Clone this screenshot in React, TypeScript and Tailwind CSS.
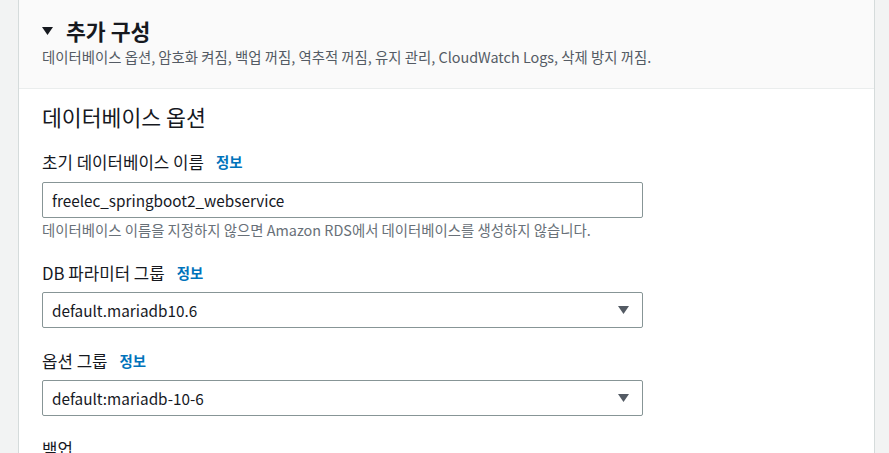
import React from "react";

const font = { fontFamily: '"Noto Sans CJK KR", "Noto Sans", sans-serif' };

function Caret() {
  return (
    <svg width="11" height="8" viewBox="0 0 11 8" className="shrink-0">
      <path d="M0 0 L11 0 L5.5 8 Z" fill="#545b64" />
    </svg>
  );
}

function Label({ text }: { text: string }) {
  return (
    <div className="flex h-[22px] items-center gap-[12px] text-[16.8px] leading-[22px] text-[#16191f]">
      <span>{text}</span>
      <span className="text-[14.4px] font-bold text-[#0073bb]">정보</span>
    </div>
  );
}

function Select({ value }: { value: string }) {
  return (
    <div className="flex h-[36px] w-[601px] items-center justify-between rounded-[2px] border border-[#879596] bg-white pl-[9px] pr-[13px] text-[15.3px] text-[#16191f]">
      <span>{value}</span>
      <Caret />
    </div>
  );
}

export default function App() {
  return (
    <div className="flex h-[453px] w-[889px] overflow-hidden bg-[#f2f3f3]" style={font}>
      <div className="w-[18px] shrink-0" />
      <div className="flex w-[857px] shrink-0 flex-col border-x border-[#d5dbdb] bg-white">
        <div className="flex h-[71px] shrink-0 flex-col border-b border-[#eaeded] bg-[#fafafa] pl-[23px] pt-[17px] box-content">
          <div className="flex h-[28px] items-center gap-[13px]">
            <svg width="11" height="8" viewBox="0 0 11 8" className="shrink-0">
              <path d="M0 0 L11 0 L5.5 8 Z" fill="#16191f" />
            </svg>
            <span className="text-[21.6px] font-bold leading-[28px] text-[#16191f]">추가 구성</span>
          </div>
          <div className="mt-[2px] text-[14.4px] leading-[20px] text-[#545b64]">
            데이터베이스 옵션, 암호화 켜짐, 백업 꺼짐, 역추적 꺼짐, 유지 관리, CloudWatch Logs, 삭제 방지 꺼짐.
          </div>
        </div>
        <div className="flex flex-col pl-[23px] pt-[14px]">
          <div className="h-[28px] text-[21.6px] leading-[28px] text-[#16191f]">데이터베이스 옵션</div>
          <div className="mt-[20px]">
            <Label text="초기 데이터베이스 이름" />
          </div>
          <div className="mt-[9px] flex h-[36px] w-[601px] items-center rounded-[2px] border border-[#879596] bg-white pl-[9px] text-[15.3px] text-[#16191f]">
            freelec_springboot2_webservice
          </div>
          <div className="mt-[2px] h-[20px] text-[14.4px] leading-[20px] text-[#687078]">
            데이터베이스 이름을 지정하지 않으면 Amazon RDS에서 데이터베이스를 생성하지 않습니다.
          </div>
          <div className="mt-[22px]">
            <Label text="DB 파라미터 그룹" />
          </div>
          <div className="mt-[8px]">
            <Select value="default.mariadb10.6" />
          </div>
          <div className="mt-[22px]">
            <Label text="옵션 그룹" />
          </div>
          <div className="mt-[8px]">
            <Select value="default:mariadb-10-6" />
          </div>
          <div className="mt-[22px] h-[22px] text-[16.8px] leading-[22px] text-[#16191f]">백업</div>
        </div>
      </div>
    </div>
  );
}
